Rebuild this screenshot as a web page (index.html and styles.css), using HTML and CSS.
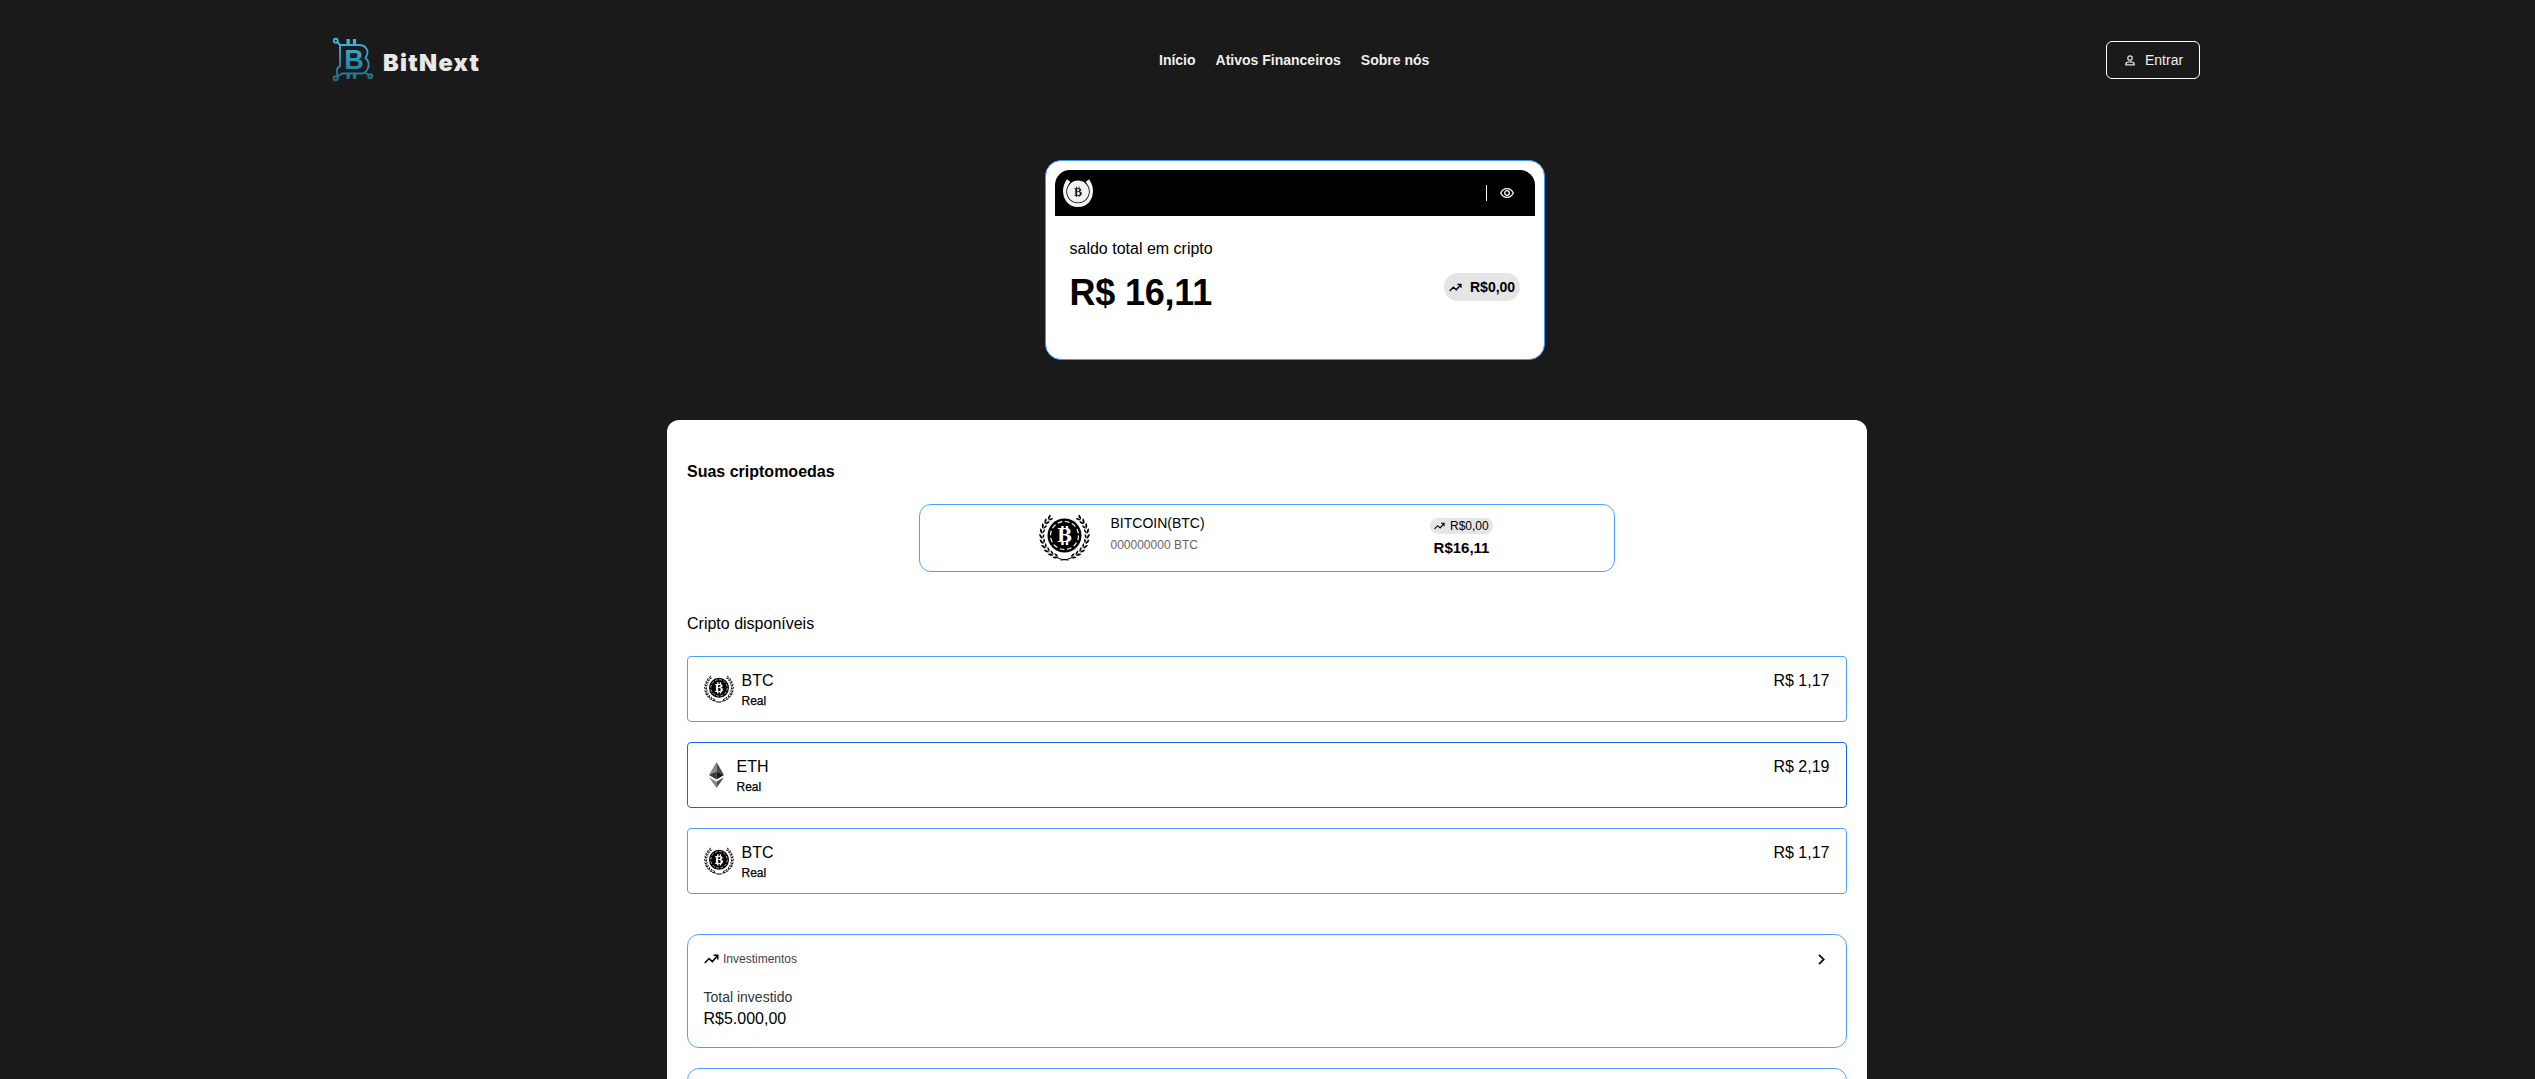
FILE: index.html
```html
<!DOCTYPE html>
<html lang="pt-BR">
<head>
<meta charset="utf-8">
<title>BitNext</title>
<link rel="stylesheet" href="styles.css">
</head>
<body>
<svg class="sprite" aria-hidden="true">
  <symbol id="coin" viewBox="0 0 51 47">
    <g transform="translate(25.5 21.5)" fill="currentColor">
      <g id="branch-leaves">
        <path id="lf" transform="rotate(40) translate(0 -22.400)" d="M2.600-.3C1.400-2.400-.8-3-2.600-2.700-2-.9-.2.200 2.600-.3ZM2.600.200C1 2.200-.8 2.600-2.300 2.100-1.600.6 0-.1 2.600.200Z"/>
        <use href="#lf" transform="rotate(13)"/>
        <use href="#lf" transform="rotate(26)"/>
        <use href="#lf" transform="rotate(39)"/>
        <use href="#lf" transform="rotate(52)"/>
        <use href="#lf" transform="rotate(65)"/>
        <use href="#lf" transform="rotate(78)"/>
        <use href="#lf" transform="rotate(91)"/>
        <use href="#lf" transform="rotate(104)"/>
        <use href="#lf" transform="rotate(117)"/>
        <path d="M9 21.500Q4 24.500-4 24.600" fill="none" stroke="currentColor" stroke-width="1"/>
      </g>
      <use href="#branch-leaves" transform="scale(-1 1)"/>
      <circle r="17"/>
      <circle r="14" fill="none" stroke="#fff" stroke-width="1.200" stroke-dasharray="4.600 2.730"/>
      <text y="6.600" text-anchor="middle" class="coin-letter">B</text>
      <path d="M-2-9.500v3.500M2.500-9.500v3.500M-2 6v3.500M2.500 6v3.500" stroke="#fff" stroke-width="2.400"/>
    </g>
  </symbol>
  <symbol id="trend" viewBox="0 0 15 10">
    <path d="M.8 9 5 4.600 8.400 7.600 13.400 1.800M9.600 1.300h4.200V5.400" fill="none" stroke="currentColor" stroke-width="1.500"/>
  </symbol>
</svg>

<header class="topbar">
  <a class="brand">
    <svg class="brand-mark" width="42" height="45" viewBox="0 0 42 45">
      <defs><linearGradient id="teal" gradientUnits="userSpaceOnUse" x1="0" y1="0" x2="0" y2="45"><stop offset="0" stop-color="#45bbe4"/><stop offset="1" stop-color="#1c6d86"/></linearGradient></defs>
      <g fill="none" stroke="url(#teal)" stroke-width="1.900">
        <circle cx="3.700" cy="3.700" r="2"/><circle cx="3.700" cy="41.300" r="2"/><circle cx="38.300" cy="39.300" r="2"/>
        <path d="M5.200 5.200 8 8h19c6 0 9 4 8.500 8.500L33.500 21c3 2.500 4 7 2.500 10-1.500 3.500-3.500 5.200-6 5.500H10L5.200 40M8 8v21l-2.800 2.500V40M32.500 35.500l4.300 2.500"/>
        <path d="M16.200 2v5.500M22.500 2v5.500M16.200 37v5M22.500 37v5" stroke-width="3.200"/>
      </g>
      <text x="12.300" y="31.800" class="mark-letter">B</text>
    </svg>
    <span class="brand-name">BitNext</span>
  </a>
  <nav class="menu"><a>Início</a><a>Ativos Financeiros</a><a>Sobre nós</a></nav>
  <button class="login">
    <svg width="10" height="11" viewBox="0 0 10 11" fill="none" stroke="#ddd" stroke-width="1.300"><circle cx="5" cy="3" r="2.200"/><path d="M.8 9.900V8.700C1.200 7.300 3 6.900 5 6.900s3.800.4 4.200 1.800v1.200Z"/></svg>
    <span>Entrar</span>
  </button>
</header>

<section class="balance">
  <div class="balance-bar">
    <svg width="30" height="30" viewBox="0 0 30 30">
      <path d="M5.600 2.500C1 9 .8 17 5 22.500 10 28.500 20 28.500 25 22.500 29.200 17 29 9 24.400 2.500" fill="none" stroke="#f2f2f2" stroke-width="4"/>
      <circle cx="15" cy="13.500" r="11.700" fill="#000"/><circle cx="15" cy="13.500" r="10.900" fill="#f2f2f2"/>
      <text x="15" y="17.700" text-anchor="middle" class="badge-letter">B</text>
      <path d="M13.500 8.500v2M16 8.500v2M13.500 17v2M16 17v2" stroke="#222" stroke-width=".9"/>
    </svg>
    <div class="bar-actions">
      <i class="divider"></i>
      <svg width="14" height="10" viewBox="0 0 14 10" fill="none" stroke="#fff" stroke-width="1.300"><path d="M.7 5C2 2.200 4.300.7 7 .7S12 2.200 13.300 5C12 7.800 9.700 9.300 7 9.300S2 7.800.7 5Z"/><circle cx="7" cy="5" r="2.300"/></svg>
    </div>
  </div>
  <div class="balance-body">
    <div><p class="caption">saldo total em cripto</p><p class="total">R$ 16,11</p></div>
    <span class="pill pill-lg"><svg width="13" height="9"><use href="#trend"/></svg>R$0,00</span>
  </div>
</section>

<main class="panel">
  <h2 class="heading">Suas criptomoedas</h2>
  <article class="holding">
    <div class="holding-coin">
      <svg width="51" height="47"><use href="#coin"/></svg>
      <div><p class="coin-name">BITCOIN(BTC)</p><p class="coin-qty">000000000 BTC</p></div>
    </div>
    <div class="holding-value"><span class="pill pill-sm"><svg width="11" height="8"><use href="#trend"/></svg>R$0,00</span><strong>R$16,11</strong></div>
  </article>

  <h3 class="subheading">Cripto disponíveis</h3>
  <ul class="assets">
    <li class="asset"><svg class="asset-icon" width="30" height="28"><use href="#coin"/></svg><div><p class="ticker">BTC</p><p class="currency">Real</p></div><span class="price">R$ 1,17</span></li>
    <li class="asset asset-active">
      <svg class="asset-icon eth" width="15" height="26" viewBox="0 0 15 26"><path d="M7.500 0 0 13l7.500-3.500Z" fill="#8a8a8a"/><path d="M7.500 0 15 13 7.500 9.500Z" fill="#4a4a4a"/><path d="M7.500 9.500 0 13l7.500 4.500Z" fill="#393939"/><path d="M7.500 9.500 15 13l-7.500 4.500Z" fill="#181818"/><path d="M0 15.300 7.500 19.700V26Z" fill="#858585"/><path d="M15 15.300 7.500 19.700V26Z" fill="#484848"/></svg>
      <div><p class="ticker">ETH</p><p class="currency">Real</p></div><span class="price">R$ 2,19</span></li>
    <li class="asset"><svg class="asset-icon" width="30" height="28"><use href="#coin"/></svg><div><p class="ticker">BTC</p><p class="currency">Real</p></div><span class="price">R$ 1,17</span></li>
  </ul>

  <section class="invest">
    <div class="invest-head">
      <svg width="15" height="10"><use href="#trend"/></svg><span>Investimentos</span>
      <svg class="chevron" width="7" height="11" viewBox="0 0 7 11"><path d="M1 .8 5.700 5.500 1 10.200" fill="none" stroke="#111" stroke-width="1.800"/></svg>
    </div>
    <p class="invest-label">Total investido</p>
    <p class="invest-total">R$5.000,00</p>
  </section>
  <section class="invest"></section>
</main>
</body>
</html>
```
FILE: styles.css
```css
* { box-sizing: border-box; }
body {
  margin: 0;
  height: 1079px;
  overflow: hidden;
  background: #1a1a1a;
  color: #000;
  font-family: Arial, "Liberation Sans", sans-serif;
  font-size: 16px;
}
p, h2, h3, ul { margin: 0; padding: 0; }
.sprite { display: none; }

.topbar {
  display: grid;
  grid-template-columns: 827px 1fr auto;
  align-items: center;
  height: 120px;
  padding: 0 335px 0 332px;
}
.brand { display: flex; align-items: center; gap: 9px; }
.brand-mark { display: block; margin-top: -2px; }
.brand-name {
  padding-top: 5px;
  color: #e8e8e8;
  font: 900 23.5px/30px "Arial Black", Inter, sans-serif;
  letter-spacing: 1.3px;
}
.mark-letter { fill: url(#teal); font: bold 27px "Liberation Sans", sans-serif; }
.menu { display: flex; gap: 20px; color: #eee; font: bold 14px/20px Arial, "Liberation Sans", sans-serif; }
.login {
  display: flex;
  align-items: center;
  gap: 10px;
  width: 94px;
  height: 38px;
  padding: 0 0 0 18px;
  border: 1px solid #fff;
  border-radius: 6px;
  background: none;
  color: #eee;
  font: 14px Arial, "Liberation Sans", sans-serif;
}

.balance {
  width: 500px;
  height: 200px;
  margin: 40px 0 60px 1045px;
  padding: 9px;
  border: 1px solid #4096ff;
  border-radius: 16px;
  background: #fff;
}
.balance-bar {
  display: flex;
  justify-content: space-between;
  align-items: center;
  height: 46px;
  padding: 0 21px 0 8px;
  border-radius: 15px 15px 0 0;
  background: #000;
}
.badge-letter { fill: #111; font: bold 12px "Liberation Serif", serif; }
.bar-actions { display: flex; align-items: center; gap: 13px; }
.divider { width: 1px; height: 16px; background: #fff; }
.balance-body { display: flex; justify-content: space-between; padding: 23px 15px 0 14.5px; }
.caption { line-height: 20px; }
.total { margin-top: 14px; font-size: 36px; font-weight: bold; letter-spacing: -.2px; line-height: 40px; }
.pill { display: flex; align-items: center; background: #e5e5e5; }
.pill-lg {
  gap: 8px;
  width: 76px;
  height: 28px;
  margin-top: 34px;
  padding-left: 5px;
  border-radius: 14px;
  font-size: 14px;
  font-weight: bold;
}
.pill-sm { gap: 5px; width: 63px; height: 16px; padding-left: 4px; border-radius: 8px; font-size: 12px; }

.panel {
  width: 1200px;
  height: 659px;
  margin-left: 667px;
  padding: 42px 20px 0;
  border-radius: 12px 12px 0 0;
  background: #fff;
  overflow: hidden;
}
.heading { font-size: 16px; line-height: 20px; }
.holding {
  display: flex;
  justify-content: space-between;
  width: 696px;
  height: 68px;
  margin: 22px auto 0;
  padding: 9px 121px 0 119px;
  border: 1px solid #4ea1fb;
  border-radius: 12px;
}
.holding-coin { display: flex; gap: 20.5px; }
.coin-letter { fill: #fff; font: bold 18px "DejaVu Serif", serif; }
.coin-name { margin-top: -1px; font-size: 14px; line-height: 20px; }
.coin-qty { margin-top: 3px; color: #666; font-size: 12px; line-height: 18px; }
.holding-value { display: flex; flex-direction: column; align-items: center; padding-top: 4px; }
.holding-value strong { margin-top: 4px; font-size: 15px; line-height: 20px; }

.subheading { margin-top: 42px; font-size: 16px; font-weight: normal; line-height: 20px; }
.assets { display: grid; gap: 20px; margin-top: 22px; list-style: none; }
.asset {
  display: flex;
  height: 66px;
  padding: 14px 16.5px 0 16px;
  border: 1px solid #4ea1fb;
  border-radius: 4px;
}
.asset-active { border-color: #1763f0; }
.asset-icon { margin: 4px 7.5px 0 0; }
.eth { margin: 5px 12.5px 0 5px; }
.ticker { line-height: 20px; }
.currency { margin-top: 1px; font-size: 12px; line-height: 19px; -webkit-text-stroke: .25px #000; }
.price { margin-left: auto; line-height: 20px; }

.invest {
  height: 114px;
  margin-top: 40px;
  padding: 15px 21px 0 15.5px;
  border: 1px solid #4ea1fb;
  border-radius: 12px;
}
.invest + .invest { margin-top: 20px; }
.invest-head { display: flex; align-items: center; gap: 4.5px; height: 18px; color: #000; font-size: 12px; }
.invest-head span { color: #444; }
.chevron { margin-left: auto; }
.invest-label { margin-top: 19px; color: #333; font-size: 14px; line-height: 20px; }
.invest-total { margin-top: 2px; line-height: 20px; }
```
